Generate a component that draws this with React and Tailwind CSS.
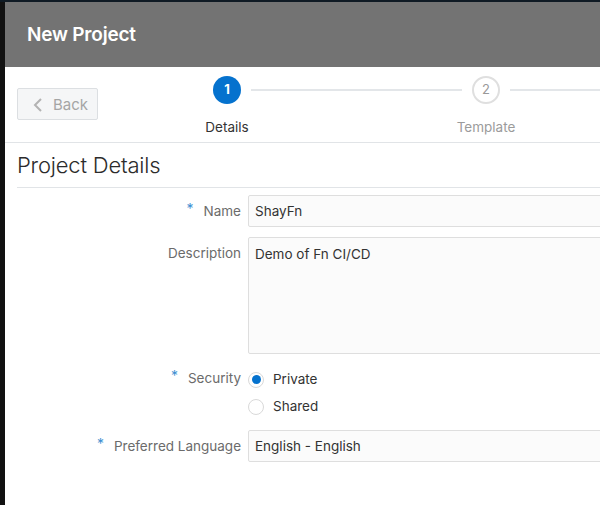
import React from 'react';

function Asterisk() {
  return <span className="text-[#3d8fd1] text-[14px] mr-[10px] relative -top-[3px]">*</span>;
}

function FieldLabel({ required, children, className = '' }) {
  return (
    <div className={`flex justify-end text-[13.5px] text-[#6b6b6b] ${className}`}>
      {required && <Asterisk />}
      <span>{children}</span>
    </div>
  );
}

function Radio({ checked, label }) {
  return (
    <div className="h-[27px] flex items-center">
      <span className="w-[16px] h-[16px] rounded-full border border-[#d9d9d9] bg-white flex items-center justify-center">
        {checked && <span className="w-[9px] h-[9px] rounded-full bg-[#0572ce]" />}
      </span>
      <span className="ml-[9px] text-[13.5px] text-[#333]">{label}</span>
    </div>
  );
}

export default function App() {
  return (
    <div className="w-[600px] h-[505px] overflow-hidden flex flex-col bg-white font-['Inter',sans-serif]">
      <div className="h-[2px] bg-[#0f1a24] shrink-0" />
      <div className="flex flex-1">
        <div className="w-[5px] bg-[#111] shrink-0" />
        <div className="w-[640px] shrink-0 flex flex-col">
          {/* header */}
          <div className="h-[65px] bg-[#737373] pl-[22px] pt-[2px] flex items-center">
            <h1 className="text-white text-[19px] font-semibold tracking-[-0.2px]">New Project</h1>
          </div>

          {/* train */}
          <div className="h-[76px] border-b border-[#e1e4e7] flex items-start">
            <button className="ml-[12px] mt-[21px] w-[81px] h-[32px] bg-[#f5f6f7] border border-[#dcdfe2] rounded-[2px] flex items-center pl-[15px] pt-[2px] text-[15px] text-[#a5a5a5]">
              <svg width="10" height="14" viewBox="0 0 10 14" fill="none" className="mr-[10px]">
                <path d="M8 1L2 7l6 6" stroke="#b3b3b3" strokeWidth="2" />
              </svg>
              Back
            </button>
            <div className="ml-[89px] flex flex-col flex-1">
              <div className="mt-[9px] flex items-center">
                <div className="w-[26px] shrink-0" />
                <div className="w-[28px] h-[28px] rounded-full bg-[#0572ce] text-white text-[13px] font-bold flex items-center justify-center shrink-0">1</div>
                <div className="ml-[10px] w-[211px] h-[2px] bg-[#e3e6e9] shrink-0" />
                <div className="ml-[10px] w-[28px] h-[28px] rounded-full border-2 border-[#dfdfdf] bg-white text-[#999] text-[13px] flex items-center justify-center shrink-0">2</div>
                <div className="ml-[10px] flex-1 h-[2px] bg-[#e3e6e9]" />
              </div>
              <div className="mt-[13px] flex text-[13.5px] leading-[20px]">
                <div className="w-[80px] text-center text-[#333]">Details</div>
                <div className="ml-[179px] w-[80px] text-center text-[#9b9b9b]">Template</div>
              </div>
            </div>
          </div>

          {/* content */}
          <div className="pl-[12px] flex flex-col">
            <div className="h-[45px] border-b border-[#e1e4e7] flex items-center">
              <h2 className="text-[22px] font-light text-[#2b2b2b] tracking-[-0.2px]">Project Details</h2>
            </div>

            <div className="grid grid-cols-[224px_1fr] gap-x-[7px] mt-[7px]">
              <FieldLabel required className="h-[32px] items-center">Name</FieldLabel>
              <div className="h-[32px] w-[380px] bg-[#fbfbfb] border border-[#dedede] rounded-[2px] px-[6px] flex items-center text-[13.5px] text-[#333]">ShayFn</div>

              <FieldLabel className="mt-[10px] items-start pt-[6px]">Description</FieldLabel>
              <div className="mt-[10px] h-[117px] w-[380px] bg-[#fbfbfb] border border-[#dedede] rounded-[2px] px-[6px] pt-[6px] text-[13.5px] text-[#333]">Demo of Fn CI/CD</div>

              <FieldLabel required className="mt-[12px] h-[24px] items-center">Security</FieldLabel>
              <div className="mt-[12px] flex flex-col">
                <Radio checked label="Private" />
                <Radio label="Shared" />
              </div>

              <FieldLabel required className="mt-[10px] h-[32px] items-center">Preferred Language</FieldLabel>
              <div className="mt-[10px] h-[32px] w-[380px] bg-[#fbfbfb] border border-[#dedede] rounded-[2px] px-[6px] flex items-center text-[13.5px] text-[#333]">English - English</div>
            </div>
          </div>
        </div>
      </div>
    </div>
  );
}
